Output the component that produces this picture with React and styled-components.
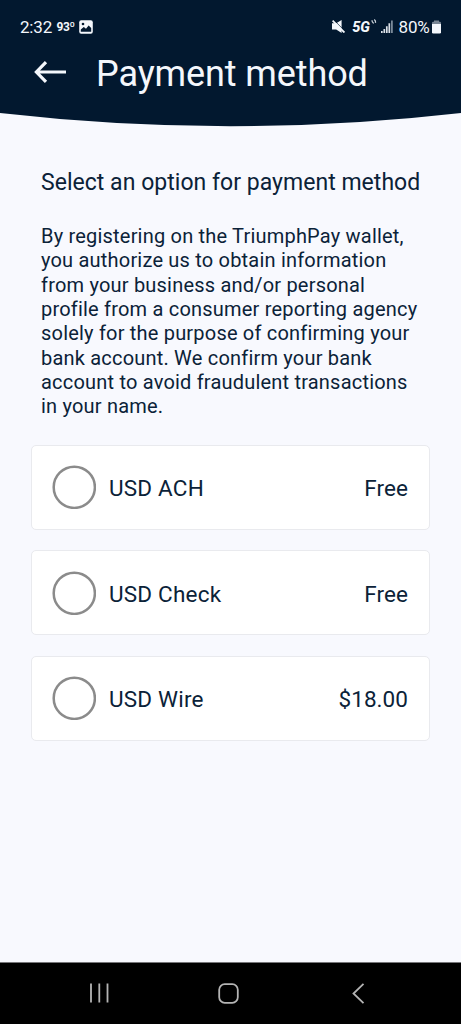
import React from "react";
import styled, { createGlobalStyle } from "styled-components";

const Global = createGlobalStyle`
  * { box-sizing: border-box; }
  body { margin: 0; background: #f8f9fe; font-family: Roboto, sans-serif; color: #0b2238; }
  svg { display: block; flex: none; }
`;
const Screen = styled.div`
  width: 461px;
  height: 1024px;
  display: flex;
  flex-direction: column;
  overflow: hidden;
  background: #f8f9fe;
`;
const Header = styled.header`
  height: 113px;
  flex: none;
  background: #02182f;
  color: #f4f7fc;
`;
const StatusBar = styled.div`
  height: 50px;
  padding: 3px 20px 0 20px;
  display: flex;
  align-items: center;
`;
const StatusText = styled.span`
  font-size: ${(p) => p.$size}px;
  font-weight: ${(p) => p.$weight || 400};
  letter-spacing: ${(p) => p.$spacing || 0}px;
  line-height: 20px;
  white-space: nowrap;
`;
const StatusLeft = styled.div`
  display: flex;
  align-items: center;
  gap: 4.5px;
  margin-right: auto;
`;
const StatusRight = styled.div`
  display: flex;
  align-items: center;
`;
const Network = styled(StatusText)`
  font-style: italic;
  margin: 2px 0 0 7px;
`;
const Percent = styled(StatusText)`
  margin: 0 2.5px 0 6px;
`;
const Signal = styled.svg`
  margin-left: 4px;
`;
const TitleRow = styled.div`
  display: flex;
  align-items: center;
  height: 44px;
  padding-left: 34px;
`;
const Title = styled.h1`
  margin: 3px 0 0 29px;
  font-size: 36px;
  font-weight: 400;
  line-height: 44px;
  letter-spacing: -0.1px;
  white-space: nowrap;
`;
const Main = styled.main`
  flex: 1;
  padding: 42px 31px 0;
`;
const Heading = styled.h2`
  margin: 0 0 0 10px;
  font-size: 23px;
  font-weight: 400;
  line-height: 28px;
  letter-spacing: 0.03px;
  white-space: nowrap;
`;
const Notice = styled.p`
  margin: 27px 0 0 10px;
  font-size: 20px;
  line-height: 24.330px;
  letter-spacing: 0.2px;
  white-space: nowrap;
`;
const Options = styled.div`
  display: flex;
  flex-direction: column;
  gap: 20.500px;
  margin-top: 26px;
`;
const Option = styled.label`
  height: 85px;
  display: flex;
  align-items: center;
  padding: 0 21px 0 20px;
  background: #fff;
  border: 1px solid #e9eaee;
  border-radius: 5px;
  font-size: 22.500px;
`;
const Radio = styled.svg`
  margin-right: 13px;
  fill: none;
  stroke: #8b8b8b;
  stroke-width: 2.500px;
`;
const Label = styled.span`
  padding-top: 2px;
  letter-spacing: 0.200px;
`;
const Price = styled(Label)`
  margin-left: auto;
  letter-spacing: 0.050px;
`;
const NavBar = styled.nav`
  height: 62px;
  flex: none;
  display: flex;
  align-items: center;
  background: #000;
  border-top: 1px solid #77777a;
  padding: 0 0 1px 89px;
`;
const NavIcon = styled.svg`
  margin-right: ${(p) => p.$gap || 0}px;
  fill: none;
  stroke: #b4b4b4;
`;

const options = [
  ["USD ACH", "Free"],
  ["USD Check", "Free"],
  ["USD Wire", "$18.00"],
];

export default function App() {
  return (
    <Screen>
      <Global />
      <Header>
        <StatusBar>
          <StatusLeft>
            <StatusText $size={17} $spacing={-0.2}>2:32</StatusText>
            <StatusText $size={12} $weight={700} $spacing={-0.4}>93º</StatusText>
            <svg width="14" height="14" viewBox="0 0 14 14">
              <rect x=".2" y=".2" width="13.6" height="13.6" rx="2" fill="#f4f7fc" />
              <path d="M1.8 11.8V9.6L4.8 7l2.2 1.800L9.600 5.400l2.600 2.700v3.700z" fill="#02182f" />
              <circle cx="4" cy="4" r="1.3" fill="#02182f" />
            </svg>
          </StatusLeft>
          <StatusRight>
            <svg width="13" height="13" viewBox="0 0 13 13">
              <path d="M0 3.200h4.200L9.600 0V13L4.200 9.400H0z" fill="#f4f7fc" />
              <path d="M1.800 0 13.500 11.700" stroke="#02182f" strokeWidth=".8" />
              <path d="M.6.700 12.400 12.500" stroke="#f4f7fc" strokeWidth="1.800" />
            </svg>
            <Network $size={14.5} $weight={800} $spacing={-0.2}>5G</Network>
            <svg width="7" height="18" viewBox="0 0 7 18">
              <path d="M2 2.3q-.1 2 1.700 3.100M4.300 1.500q1.600 1.300 1.200 3.400" fill="none" stroke="#c9d0d8" strokeWidth="1.300" />
            </svg>
            <Signal width="12" height="13" viewBox="0 0 12 13">
              <path d="M.8 13v-2M3.300 13V9M5.800 13V6.200M8.300 13V3.300" stroke="#dce1e8" strokeWidth="1.700" />
              <path d="M10.900 13V.4" stroke="#8290a0" strokeWidth="1.700" />
            </Signal>
            <Percent $size={17} $spacing={-0.2}>80%</Percent>
            <svg width="9" height="14" viewBox="0 0 9 14">
              <path d="M0 4V3q0-1.200 1.200-1.200H2V.4h5v1.400h.8Q9 1.800 9 3v1z" fill="#788594" />
              <path d="M0 4h9v8.200q0 1.300-1.300 1.300H1.300Q0 13.500 0 12.200z" fill="#f4f7fc" />
            </svg>
          </StatusRight>
        </StatusBar>
        <TitleRow>
          <svg width="33" height="24" viewBox="0 0 33 24" fill="none" stroke="#f4f7fc" strokeWidth="3.200">
            <path d="M12 2.200 2.400 12l9.600 9.800M2.500 12H32" />
          </svg>
          <Title>Payment method</Title>
        </TitleRow>
      </Header>
      <svg width="461" height="14" viewBox="0 0 461 14">
        <path d="M0 0Q230.500 26.400 461 0z" fill="#02182f" />
      </svg>
      <Main>
        <Heading>Select an option for payment method</Heading>
        <Notice>
          By registering on the TriumphPay wallet,<br />
          you authorize us to obtain information<br />
          from your business and/or personal<br />
          profile from a consumer reporting agency<br />
          solely for the purpose of confirming your<br />
          bank account. We confirm your bank<br />
          account to avoid fraudulent transactions<br />
          in your name.
        </Notice>
        <Options>
          {options.map(([name, price]) => (
            <Option key={name}>
              <Radio width="44" height="44" viewBox="0 0 44 44">
                <circle cx="22.300" cy="22.300" r="20.600" />
              </Radio>
              <Label>{name}</Label>
              <Price>{price}</Price>
            </Option>
          ))}
        </Options>
      </Main>
      <NavBar>
        <NavIcon width="20" height="20" viewBox="0 0 20 20" $gap={109} strokeWidth="1.800">
          <path d="M2 .4v19.200M10.300 .4v19.200M18.500 .4v19.200" />
        </NavIcon>
        <NavIcon width="21" height="21" viewBox="0 0 21 21" $gap={113} strokeWidth="1.800">
          <rect x="1.200" y="1.200" width="18.600" height="18.600" rx="5.500" />
        </NavIcon>
        <NavIcon width="13" height="21" viewBox="0 0 13 21" strokeWidth="1.800">
          <path d="M11.500 .8 1.500 10.500l10 9.700" />
        </NavIcon>
      </NavBar>
    </Screen>
  );
}
